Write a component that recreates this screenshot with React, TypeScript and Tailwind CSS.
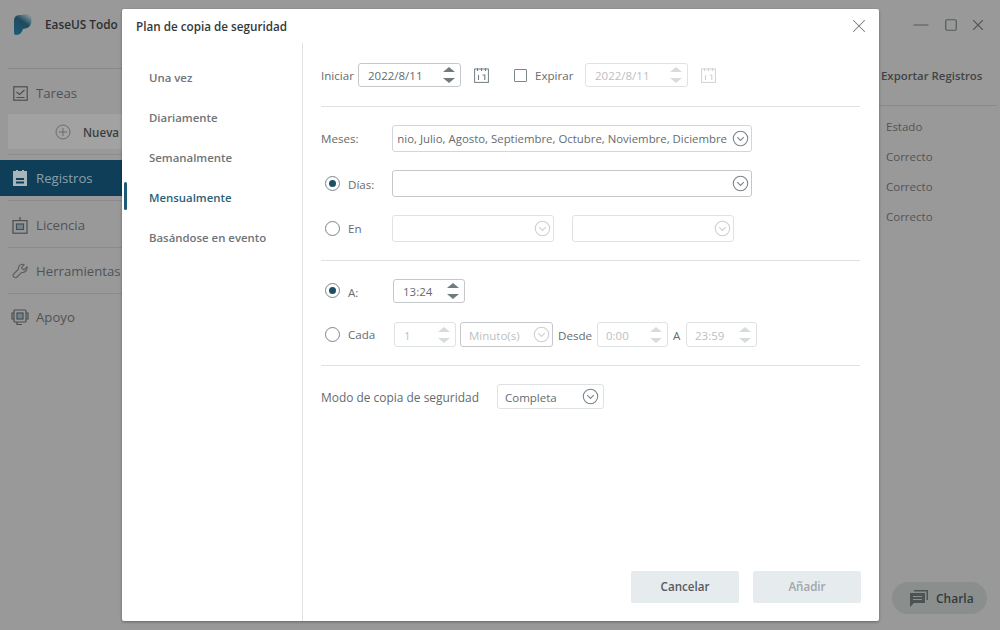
import React from "react";
import { X, Minus, Square } from "lucide-react";

const font = { fontFamily: '"Open Sans", "Noto Sans", sans-serif' };

function Chevron({ faded = false }: { faded?: boolean }) {
  const c = faded ? "#ccd0d2" : "#7b858a";
  return (
    <svg width="17" height="17" viewBox="0 0 17 17" fill="none" className="shrink-0">
      <circle cx="8.5" cy="8.5" r="7.2" stroke={c} strokeWidth="1.1" />
      <path d="M5.2 7.2 L8.5 10.4 L11.8 7.2" stroke={c} strokeWidth="1.1" />
    </svg>
  );
}

function Spinner({ faded = false }: { faded?: boolean }) {
  const c = faded ? "#d8dbdd" : "#6f7b80";
  return (
    <svg width="14" height="20" viewBox="0 0 14 20" className="shrink-0">
      <path d="M7 2 L13 7 H1 Z" fill={c} />
      <path d="M7 18 L13 13 H1 Z" fill={c} />
    </svg>
  );
}

function Calendar({ faded = false }: { faded?: boolean }) {
  const c = faded ? "#d0d3d5" : "#737d82";
  return (
    <svg width="15" height="15" viewBox="0 0 15 15" fill="none">
      <rect x="0.6" y="1" width="13.8" height="13.4" stroke={c} strokeWidth="1" />
      <path d="M3.5 0V3M7.5 0V3M11.5 0V3" stroke={c} strokeWidth="1.1" />
      <path d="M4.5 7V12M8.5 7H10.8V12" stroke={c} strokeWidth="1.1" />
    </svg>
  );
}

function Radio({ on = false }: { on?: boolean }) {
  return (
    <span className="w-[15px] h-[15px] rounded-full border border-[#7a868b] flex items-center justify-center shrink-0 bg-white">
      {on && <span className="w-[7px] h-[7px] rounded-full bg-[#1a4f66]" />}
    </span>
  );
}

function Field({
  text,
  w,
  h = "h-[24px]",
  faded = false,
  icon,
  strong = false,
  pad = "pl-[9px]",
}: {
  text?: string;
  w: string;
  h?: string;
  faded?: boolean;
  icon: React.ReactNode;
  strong?: boolean;
  pad?: string;
}) {
  return (
    <div
      className={`${w} ${h} rounded-[3px] border ${strong ? "border-[#c4c8ca]" : "border-[#dfe2e3]"} flex items-center justify-between ${pad} pr-[2px] shrink-0 overflow-hidden`}
    >
      <span className={`text-[11.5px] pt-[2px] whitespace-nowrap ${faded ? "text-[#bcc0c2]" : "text-[#666b6f]"}`}>{text}</span>
      {icon}
    </div>
  );
}

function Divider() {
  return <div className="h-px bg-[#dfe2e3]" />;
}

function Nav({ label, active = false }: { label: string; active?: boolean }) {
  return (
    <div className="relative h-[40px] flex items-center pl-[27px]">
      {active && <span className="absolute left-[2px] top-[4px] w-[3px] h-[28px] rounded-sm bg-[#1d5a75]" />}
      <span className={`text-[11.4px] font-semibold ${active ? "text-[#2b6279]" : "text-[#6f7478]"}`}>{label}</span>
    </div>
  );
}

function Side({ label, icon, active = false }: { label: string; icon: React.ReactNode; active?: boolean }) {
  return (
    <div className={`h-[36px] flex items-center pl-[11px] gap-[7px] ${active ? "bg-[#0f3e58]" : ""}`}>
      <span className="w-[18px] shrink-0 flex justify-center">{icon}</span>
      <span className={`text-[13.2px] pt-[2px] whitespace-nowrap ${active ? "text-[#8ba0ac]" : "text-[#505355]"}`}>{label}</span>
    </div>
  );
}

export default function App() {
  const ic = "#4a4f52";
  return (
    <div className="relative w-[1000px] h-[630px] overflow-hidden bg-[#999999]" style={font}>
      {/* Background application */}
      <div className="flex h-full">
        <div className="w-[122px] shrink-0 overflow-hidden">
          <div className="h-[68px] flex items-start pt-[13px] pl-[13px] gap-[13px]">
            <svg width="19" height="23" viewBox="0 0 19 23">
              <defs>
                <linearGradient id="logoGrad" x1="0.2" y1="1" x2="0.8" y2="0">
                  <stop offset="0" stopColor="#1b5a75" />
                  <stop offset="0.6" stopColor="#1f4a5e" />
                  <stop offset="1" stopColor="#8c9aa1" />
                </linearGradient>
              </defs>
              <path d="M1 8 C1 4 3 2 7 2 C10 2 13 0.5 16 1 C18 1.5 18.5 4 18.5 7 C18.5 12 16 15 12 15.5 L10 16 C9 19 7 22 3 22 C1.5 22 1 21 1 19 Z" fill="url(#logoGrad)" />
            </svg>
            <span className="text-[11.8px] font-semibold text-[#2c2f31] mt-[3px] whitespace-nowrap">EaseUS Todo</span>
          </div>
          <div className="h-px bg-[#878787] ml-[8px]" />
          <div className="mt-[6px]">
            <Side
              label="Tareas"
              icon={
                <svg width="15" height="15" viewBox="0 0 15 15" fill="none" stroke={ic} strokeWidth="1.2">
                  <rect x="0.8" y="0.8" width="13.4" height="13.4" />
                  <path d="M3.5 6 L6.5 8.5 L11.5 4M3.5 11.5H11.5" />
                </svg>
              }
            />
          </div>
          <div className="ml-[8px] mt-[3px] h-[35px] bg-[#a2a2a2] flex items-center pl-[47px] gap-[12px]">
            <svg width="16" height="16" viewBox="0 0 16 16" fill="none" stroke="#6a6d6f" strokeWidth="1">
              <circle cx="8" cy="8" r="7" />
              <path d="M8 4V12M4 8H12" />
            </svg>
            <span className="text-[11.6px] pt-[2px] font-semibold text-[#3c3f41] whitespace-nowrap">Nueva</span>
          </div>
          <div className="mt-[5px] h-px bg-[#8d8d8d] ml-[8px]" />
          <div className="mt-[5px]">
            <Side
              active
              label="Registros"
              icon={
                <svg width="16" height="16" viewBox="0 0 16 16">
                  <path d="M1 1H4V0H6V1H10V0H12V1H15V16H1Z" fill="#a9b4ba" />
                  <path d="M4 8H12V10H4ZM4 11.5H12V13.5H4Z" fill="#0f3e58" />
                </svg>
              }
            />
          </div>
          <div className="mt-[4px] h-px bg-[#8a8a8a] ml-[8px]" />
          <div className="mt-[6px]">
            <Side
              label="Licencia"
              icon={
                <svg width="16" height="17" viewBox="0 0 16 17" fill="none" stroke={ic} strokeWidth="1.2">
                  <path d="M8 0V3" />
                  <rect x="1" y="3.6" width="14" height="12.6" />
                  <rect x="4.5" y="7" width="7" height="5.5" fill="#6f8490" />
                </svg>
              }
            />
          </div>
          <div className="mt-[4px] h-px bg-[#8a8a8a] ml-[8px]" />
          <div className="mt-[5px]">
            <Side
              label="Herramientas"
              icon={
                <svg width="16" height="16" viewBox="0 0 16 16" fill="none" stroke="#5a5e60" strokeWidth="1.1">
                  <path d="M15 4 L12 7 L9.5 5 L12 1.5 C9 0.5 6 2.5 6.5 6 L1.2 11.5 C0.5 13 2.5 15.3 4.5 14.5 L9.5 9.5 C13 10 15.5 7.5 15 4Z" />
                </svg>
              }
            />
          </div>
          <div className="mt-[4px] h-px bg-[#8a8a8a] ml-[8px]" />
          <div className="mt-[5px]">
            <Side
              label="Apoyo"
              icon={
                <svg width="18" height="17" viewBox="0 0 18 17" fill="none" stroke={ic} strokeWidth="1.2">
                  <rect x="3" y="1" width="12" height="12" rx="1" />
                  <rect x="6" y="4" width="6" height="6" fill="#6f8490" />
                  <path d="M3 4H1V10H3M15 4H17V10H15M6 13V15.5H11" />
                </svg>
              }
            />
          </div>
        </div>

        <div className="flex-1" />

        <div className="w-[121px] shrink-0 relative">
          <div className="h-[50px] flex items-center justify-end gap-[11px] pr-[13px]">
            <Minus size={24} strokeWidth={1.2} color="#55595b" />
            <Square size={14} strokeWidth={2} color="#55595b" />
            <X size={18} strokeWidth={1.5} color="#55595b" />
          </div>
          <div className="h-[55px] pt-[17px] text-[11.4px] font-semibold text-[#414446] pl-[2px] whitespace-nowrap">
            Exportar Registros
          </div>
          <div className="h-px bg-[#8a8a8a] mr-[3px]" />
          <div className="pl-[7px] pt-[6px] text-[11.5px] text-[#515456]">
            <div className="h-[30px] flex items-center">Estado</div>
            <div className="h-[30px] flex items-center">Correcto</div>
            <div className="h-[30px] flex items-center">Correcto</div>
            <div className="h-[30px] flex items-center">Correcto</div>
          </div>
        </div>
      </div>

      {/* Chat pill */}
      <div className="absolute left-[892px] top-[582px] w-[95px] h-[32px] rounded-full bg-[#8a8f8e] flex items-center pl-[18px] gap-[8px]">
        <svg width="18" height="18" viewBox="0 0 18 18">
          <path d="M4 1H18V11H16.5V2.5H4Z" fill="#4d5355" />
          <path d="M0 4H15V14H4L0 18Z" fill="#4d5355" />
          <path d="M3 7.5H12M3 10.5H12" stroke="#8a8f8e" strokeWidth="1" />
        </svg>
        <span className="text-[12px] font-semibold text-[#35393b] pt-[1px]">Charla</span>
      </div>

      {/* Modal */}
      <div className="absolute left-[122px] top-[9px] w-[757px] h-[612px] bg-white rounded-[2px] shadow-[0_1px_3px_rgba(0,0,0,0.35)] flex flex-col">
        <div className="h-[34px] shrink-0 flex items-center justify-between pl-[14px] pr-[9px]">
          <span className="text-[11.7px] pt-[2px] font-semibold text-[#33373a]">Plan de copia de seguridad</span>
          <X size={22} strokeWidth={1.1} color="#777b7e" />
        </div>
        <div className="flex flex-1 min-h-0">
          <div className="w-[181px] shrink-0 border-r border-[#dfe1e2] pt-[15px]">
            <Nav label="Una vez" />
            <Nav label="Diariamente" />
            <Nav label="Semanalmente" />
            <Nav label="Mensualmente" active />
            <Nav label="Basándose en evento" />
          </div>

          <div className="flex-1 pl-[18px] pr-[19px] flex flex-col text-[11.6px] text-[#666b6f] pt-[20px]">
            <div className="flex items-center h-[24px]">
              <span className="w-[37px] pt-[2px]">Iniciar</span>
              <Field w="w-[103px]" text="2022/8/11" strong icon={<span className="mr-[2px] flex"><Spinner /></span>} />
              <span className="ml-[13px] flex"><Calendar /></span>
              <span className="ml-[25px] w-[13px] h-[13px] border border-[#7d8689] rounded-[1px]" />
              <span className="ml-[8px] w-[50px] pt-[2px]">Expirar</span>
              <Field w="w-[103px]" text="2022/8/11" faded icon={<span className="mr-[2px] flex"><Spinner faded /></span>} />
              <span className="ml-[13px] flex"><Calendar faded /></span>
            </div>
            <div className="mt-[19px]"><Divider /></div>

            <div className="mt-[18px] flex items-center h-[27px]">
              <span className="w-[71px]">Meses:</span>
              <div className="w-[360px] h-[27px] rounded-[3px] border border-[#d3d6d8] flex items-center justify-end pr-[2px] gap-[5px] overflow-hidden">
                <span className="flex justify-end w-[329px] overflow-hidden">
                  <span className="text-[11.4px] whitespace-nowrap shrink-0">Junio, Julio, Agosto, Septiembre, Octubre, Noviembre, Diciembre</span>
                </span>
                <Chevron />
              </div>
            </div>
            <div className="mt-[18px] flex items-center h-[27px]">
              <span className="w-[71px] flex items-center pl-[4px] gap-[8px]"><Radio on /><span className="pt-[2px]">Días:</span></span>
              <Field w="w-[360px]" h="h-[27px]" strong icon={<Chevron />} />
            </div>
            <div className="mt-[18px] flex items-center h-[27px]">
              <span className="w-[71px] flex items-center pl-[4px] gap-[8px]"><Radio />En</span>
              <Field w="w-[162px]" h="h-[27px]" icon={<Chevron faded />} />
              <span className="ml-[18px]"><Field w="w-[162px]" h="h-[27px]" icon={<Chevron faded />} /></span>
            </div>
            <div className="mt-[18px]"><Divider /></div>

            <div className="mt-[18px] flex items-center h-[24px]">
              <span className="w-[72px] flex items-center pl-[4px] gap-[8px]"><Radio on /><span className="pt-[3px]">A:</span></span>
              <Field w="w-[72px]" text="13:24" strong icon={<span className="mr-[2px] flex"><Spinner /></span>} />
            </div>
            <div className="mt-[19px] flex items-center h-[25px]">
              <span className="w-[73px] flex items-center pl-[4px] gap-[8px]"><Radio />Cada</span>
              <Field w="w-[62px]" h="h-[25px]" text="1" faded icon={<span className="mr-[2px] flex"><Spinner faded /></span>} />
              <span className="ml-[4px]">
                <Field w="w-[93px]" h="h-[25px]" text="Minuto(s)" faded strong pad="pl-[8px]" icon={<Chevron faded />} />
              </span>
              <span className="ml-[5px] w-[39px] pt-[2px]">Desde</span>
              <Field w="w-[71px]" h="h-[25px]" text="0:00" faded pad="pl-[8px]" icon={<span className="mr-[2px] flex"><Spinner faded /></span>} />
              <span className="ml-[5px] w-[13px] pt-[2px]">A</span>
              <Field w="w-[71px]" h="h-[25px]" text="23:59" faded pad="pl-[8px]" icon={<span className="mr-[2px] flex"><Spinner faded /></span>} />
            </div>
            <div className="mt-[18px]"><Divider /></div>

            <div className="mt-[18px] flex items-center h-[25px]">
              <span className="w-[176px] pt-[2px] text-[11.95px] whitespace-nowrap">Modo de copia de seguridad</span>
              <Field w="w-[107px]" h="h-[25px]" text="Completa" pad="pl-[7px]" icon={<span className="mr-[2px] flex"><Chevron /></span>} />
            </div>

            <div className="mt-auto mb-[18px] -mr-[1px] flex justify-end gap-[14px]">
              <div className="w-[108px] h-[32px] rounded-[2px] bg-[#e6ebee] flex items-center justify-center text-[11.6px] font-semibold text-[#555a5e]">Cancelar</div>
              <div className="w-[108px] h-[32px] rounded-[2px] bg-[#e6ebee] flex items-center justify-center text-[11.6px] font-semibold text-[#a1a6a9]">Añadir</div>
            </div>
          </div>
        </div>
      </div>
    </div>
  );
}
